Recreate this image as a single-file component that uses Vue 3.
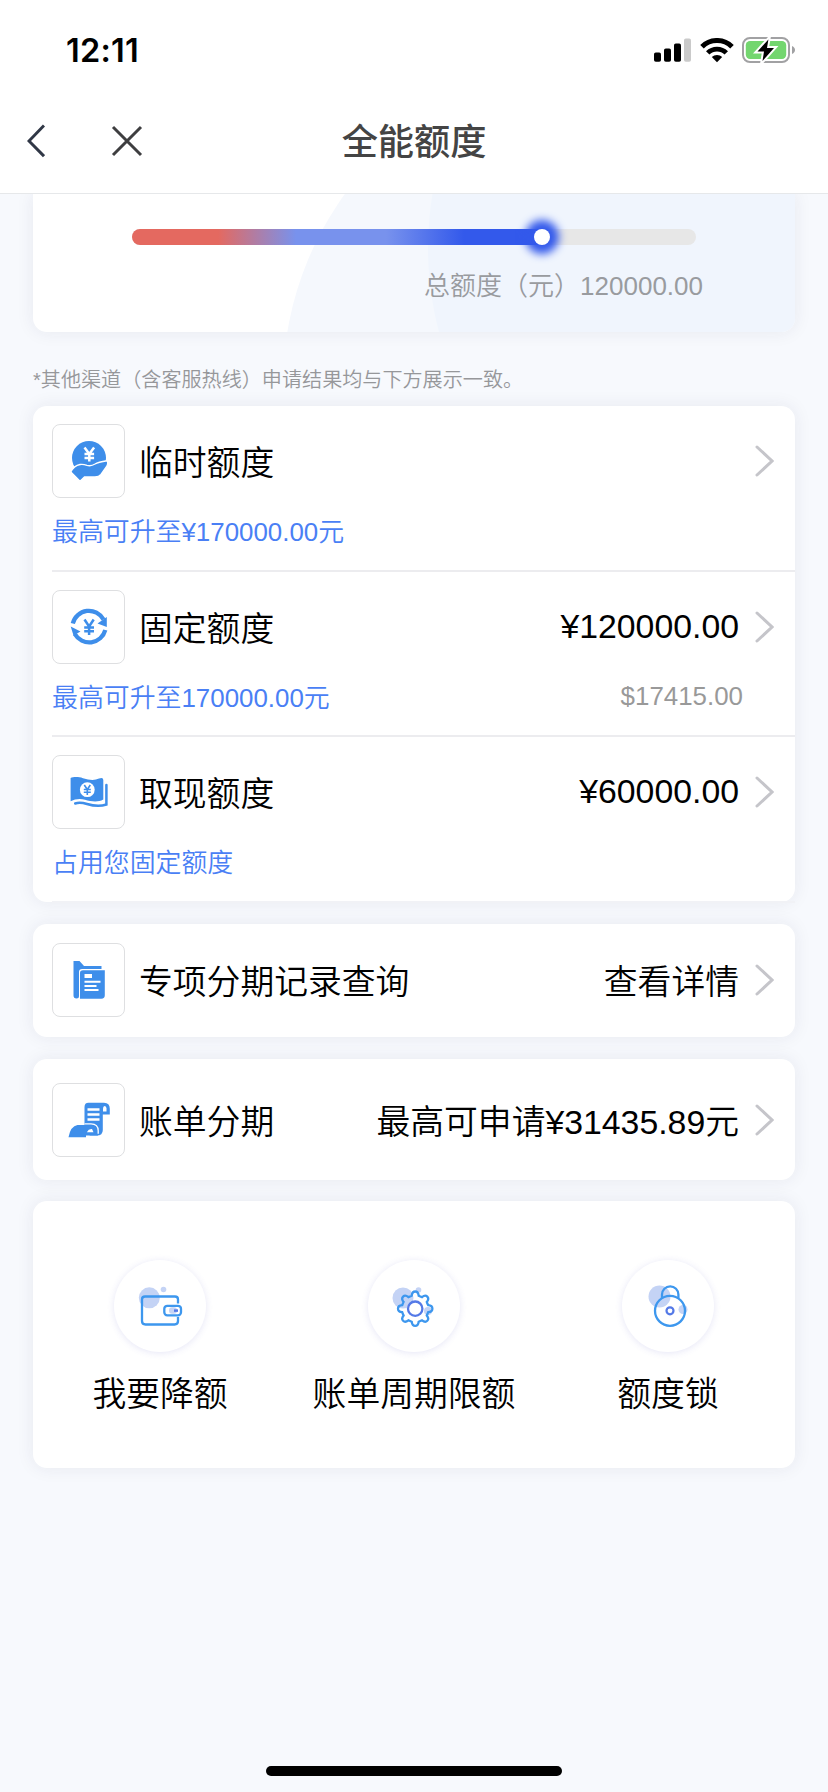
<script setup>
const limits = [
  { icon: 'hand', label: '临时额度', amount: '', note: '最高可升至¥170000.00元', sub: '' },
  { icon: 'cycle', label: '固定额度', amount: '¥120000.00', note: '最高可升至170000.00元', sub: '$17415.00' },
  { icon: 'cash', label: '取现额度', amount: '¥60000.00', note: '占用您固定额度', sub: '' },
]
const used = 72.7
</script>

<template>
  <div class="screen">
    <header class="header">
      <div class="status">
        <span class="time">12:11</span>
        <div class="indicators">
          <svg class="signal" width="38" height="24" viewBox="0 0 38 24">
            <rect x="0" y="14.5" width="7" height="9.2" rx="1.8" />
            <rect x="10" y="10.5" width="7" height="13.2" rx="1.8" />
            <rect x="20" y="5.5" width="7" height="18.2" rx="1.8" />
            <rect x="30" y="0.5" width="7" height="23.2" rx="1.8" fill="#cacaca" />
          </svg>
          <svg class="wifi" width="34" height="25" viewBox="0 0 34 25">
            <g fill="none" stroke="#000" stroke-width="5">
              <path d="M2 8.7a21.2 21.2 0 0 1 30 0" />
              <path d="M7.7 14.9a13.2 13.2 0 0 1 18.6 0" stroke-width="4.8" />
            </g>
            <path d="M17 24.2l-5.2-5.1a7.6 7.6 0 0 1 10.4 0z" />
          </svg>
          <svg class="battery" width="54" height="28" viewBox="0 0 54 28">
            <rect x="1" y="2" width="46" height="24" rx="7" fill="none" stroke="#a1a1a3" stroke-width="2" />
            <rect x="3.8" y="5" width="40.4" height="18" rx="4.2" fill="#73d66f" />
            <path d="M50 10c4 1.5 4 6.500 0 8z" fill="#a1a1a3" />
            <path d="M26.400 3.500L15.500 15.500h6.500L20.500 25l11.500-13h-7z" stroke="#fff" stroke-width="4" />
            <path d="M26.400 3.500L15.500 15.500h6.500L20.500 25l11.500-13h-7z" />
          </svg>
        </div>
      </div>
      <nav class="nav">
        <div class="nav-actions">
          <svg width="18" height="34" viewBox="0 0 18 34"><path d="M17 1.500L2 17l15 15.200" fill="none" stroke="#303746" stroke-width="3" /></svg>
          <svg width="32" height="32" viewBox="0 0 32 32"><path d="M2 2l28 28M30 2L2 30" fill="none" stroke="#3e3e40" stroke-width="3" /></svg>
        </div>
        <h1>全能额度</h1>
      </nav>
    </header>

    <main class="content">
      <section class="card summary">
        <svg class="rings" width="762" height="138" viewBox="33 194 762 138">
          <circle cx="609" cy="385" r="326" fill="#f5f8fd" />
          <circle cx="753" cy="248" r="325" fill="#f0f5fd" />
        </svg>
        <div class="track">
          <div class="fill" :style="{ width: used + '%' }"><i class="knob"></i></div>
        </div>
        <p class="total">总额度（元）120000.00</p>
      </section>

      <p class="hint">*其他渠道（含客服热线）申请结果均与下方展示一致。</p>

      <section class="card limits">
        <div v-for="item in limits" :key="item.icon" class="limit">
          <div class="row">
            <span class="tile">
              <svg v-if="item.icon === 'hand'" width="40" height="42" viewBox="0 0 40 42">
                <circle cx="20" cy="18" r="17" fill="#3e8eea" />
                <path d="M15.500 7.500l4.800 6.500 4.800-6.500M20.300 13.500v8M15.500 14h9.600M15.500 18h9.600" fill="none" stroke="#fff" stroke-width="2.500" />
                <path d="M1.800 32Q5 25.500 11 24.500Q14 24 18 25.300Q22 26.500 26 24Q29 22 38 20.700Q39.500 22.500 38 26L32 34.500Q30 37 26 37H15.500L11 41.200z" fill="#3e8eea" stroke="#fff" stroke-width="1.400" />
              </svg>
              <svg v-else-if="item.icon === 'cycle'" width="40" height="42" viewBox="0 0 40 42">
                <g fill="none" stroke="#3e8eea">
                  <path d="M3.800 17.500A16.600 16.600 0 0 1 34.500 13.500" stroke-width="4.300" />
                  <path d="M36.300 24A16.600 16.600 0 0 1 5.800 28" stroke-width="4.300" />
                  <path d="M15.500 13.500l4.600 7 4.600-7M20.100 20v9M15.200 21.500h9.800M15.200 25.300h9.800" stroke-width="2.500" />
                </g>
                <path d="M37.800 11v10L28.500 17.500zM1.700 20.500l9.800 5-7 4z" fill="#3e8eea" />
              </svg>
              <svg v-else width="40" height="42" viewBox="0 0 40 42">
                <path d="M1.600 7C4 6 9 5.500 14 7.200Q24 10.500 30 7.500Q34.300 6 34.300 9V28.500C29 31.500 22 30.500 16 28.700Q8 27 1.600 30.300z" fill="#3e8eea" />
                <path d="M37.400 14v19.500C30 36 24 34.800 18 33Q11 31 6.200 32.500" fill="none" stroke="#3e8eea" stroke-width="2.500" stroke-linecap="round" />
                <circle cx="18.300" cy="18.700" r="7.400" fill="#fff" />
                <path d="M15.300 14l3 4.500 3-4.500M18.300 18v6M14.800 18.500h7M14.800 21.300h7" fill="none" stroke="#3e8eea" stroke-width="1.600" />
              </svg>
            </span>
            <span class="label">{{ item.label }}</span>
            <span class="value money">{{ item.amount }}</span>
            <svg class="chevron" width="20" height="32" viewBox="0 0 20 32"><path d="M3 2l15 14L3 30" /></svg>
          </div>
          <div class="note"><span>{{ item.note }}</span><small>{{ item.sub }}</small></div>
        </div>
      </section>

      <section class="card records">
        <div class="row">
          <span class="tile">
            <svg width="40" height="42" viewBox="0 0 40 42">
              <path d="M4.500 2h6l4.500 5h17.500v3H13q-3 0-3 3v24q0 2.500-2.500 2.500-3 0-3-3z" fill="#3e8eea" />
              <path d="M14 11.200h21.800V36q0 3.800-3.500 3.800H11V14q0-2.800 3-2.800z" fill="#3e8eea" />
              <path d="M15.500 17h7.500" stroke="#fff" stroke-width="4" />
              <path d="M15.500 22.800h16M15.500 27h12M15.500 31h14" stroke="#fff" stroke-width="2" />
            </svg>
          </span>
          <span class="label">专项分期记录查询</span>
          <span class="value">查看详情</span>
          <svg class="chevron" width="20" height="32" viewBox="0 0 20 32"><path d="M3 2l15 14L3 30" /></svg>
        </div>
      </section>

      <section class="card installment">
        <div class="row">
          <span class="tile">
            <svg width="44" height="42" viewBox="0 0 44 42">
              <path d="M17.500 26V8q0-4.300 4-4.300h15.500q5.800 0 5.800 6v5.800h-7V31q0 5.500-6 5.500h-7z" fill="#3e8eea" />
              <path d="M36 12.500V9.500q0-2.500 1.700-2.500t1.800 2.500v3z" fill="#fff" />
              <path d="M20.500 10.500h12M20.500 15.500h12M20.500 20.500h12" stroke="#fff" stroke-width="2.700" />
              <path d="M1.500 38.200q2-11 9-12.200H26q5 1 5 6v4.500H19v1.700z" fill="#3e8eea" />
              <path d="M17.500 24.800H24q7.200 0 7.200 7v3" fill="none" stroke="#fff" stroke-width="1.300" />
              <path d="M19.800 33.200q2-3.700 5.200-3.200l1.500 3.200z" fill="#fff" />
            </svg>
          </span>
          <span class="label">账单分期</span>
          <span class="value">最高可申请¥31435.89元</span>
          <svg class="chevron" width="20" height="32" viewBox="0 0 20 32"><path d="M3 2l15 14L3 30" /></svg>
        </div>
      </section>

      <section class="card shortcuts">
        <div class="shortcut">
          <span class="round">
            <svg width="48" height="48" viewBox="0 0 48 48">
              <circle cx="13.300" cy="15.800" r="10.500" fill="#c4d3f5" />
              <circle cx="27.500" cy="7.500" r="2.800" fill="#c4d3f5" />
              <g fill="none" stroke="#3d97ee" stroke-width="2.300">
                <path d="M42 21.500v-4q0-3-3-3H9q-3 0-3 3V39q0 3.500 3.500 3.500h29q3.500 0 3.500-3.500v-4" />
                <rect x="28.300" y="23.800" width="16.700" height="9.500" rx="3" />
              </g>
              <rect x="33" y="25.300" width="8" height="6.500" rx="3" fill="#c4d3f5" />
              <path d="M38 28.600h4" stroke="#5479e7" stroke-width="2.500" />
            </svg>
          </span>
          <span>我要降额</span>
        </div>
        <div class="shortcut">
          <span class="round">
            <svg width="48" height="48" viewBox="0 0 48 48">
              <circle cx="13" cy="16" r="10.500" fill="#c4d3f5" />
              <circle cx="28.500" cy="8" r="2.800" fill="#c4d3f5" />
              <circle cx="38" cy="29" r="4" fill="#c4d3f5" />
              <path d="M20.500 13.700 Q21 9.500 24 9.500 Q27 9.500 27.500 13.700 Q29 14.500 30.800 15.100 Q34 12.500 36.100 14.600 Q38.200 16.700 35.600 19.900 Q36 21.500 37 23.200 Q41.200 23.500 41.200 26.700 Q41.200 29.800 37 30.200 Q36.200 31.900 35.600 33.500 Q38.200 36.700 36.100 38.800 Q34 40.900 30.800 38.300 Q29 39 27.500 39.700 Q27 43.900 24 43.900 Q21 43.900 20.500 39.700 Q18.800 39 17.200 38.300 Q14 40.900 11.900 38.800 Q9.800 36.700 12.400 33.500 Q11.700 31.900 11 30.200 Q6.800 29.800 6.800 26.700 Q6.800 23.500 11 23.200 Q11.700 21.500 12.400 19.900 Q9.800 16.700 11.900 14.600 Q14 12.500 17.200 15.100 Q18.800 14.400 20.500 13.700z" transform="translate(1.200 0)" fill="none" stroke="#3d97ee" stroke-width="2.300" />
              <circle cx="25.200" cy="26.700" r="7.200" fill="#fff" stroke="#5479e7" stroke-width="2.300" />
            </svg>
          </span>
          <span>账单周期限额</span>
        </div>
        <div class="shortcut">
          <span class="round">
            <svg width="48" height="48" viewBox="0 0 48 48">
              <circle cx="15.500" cy="14.500" r="11" fill="#c4d3f5" />
              <circle cx="39" cy="27.500" r="4.500" fill="#c4d3f5" />
              <g fill="none" stroke="#3d97ee" stroke-width="2.300">
                <circle cx="26" cy="28.800" r="15" />
                <path d="M18 16v-3.500a8.200 8.200 0 0 1 16.400 0V16" />
              </g>
              <circle cx="26" cy="28.800" r="3.500" fill="#fff" stroke="#5479e7" stroke-width="2.200" />
            </svg>
          </span>
          <span>额度锁</span>
        </div>
      </section>
    </main>
    <div class="home-bar"></div>
  </div>
</template>

<style>
body { background: #f7f9fd; }
</style>

<style scoped>
.screen {
  width: 828px;
  height: 1792px;
  box-sizing: border-box;
  display: flex;
  flex-direction: column;
  overflow: hidden;
  background: #f7f9fd;
  color: #000;
  font-family: "Liberation Sans", "Noto Sans CJK SC", sans-serif;
  font-size: 33.8px;
  font-weight: 350;
}
.header {
  position: relative;
  z-index: 1;
  box-sizing: border-box;
  height: 194px;
  flex: none;
  background: #fff;
  border-bottom: 1px solid #e6e8ea;
}
.status {
  height: 98px;
  box-sizing: border-box;
  padding: 2px 32px 0 66px;
  display: flex;
  align-items: center;
  justify-content: space-between;
}
.time { color: #000; font: 600 32.5px/40px Inter, sans-serif; letter-spacing: 0.2px; padding-top: 1px; }
.indicators { display: flex; align-items: center; }
.wifi { margin-left: 8px; }
.battery { margin-left: 8px; }
.nav {
  display: grid;
  grid-template-columns: 1fr auto 1fr;
  align-items: center;
  height: 86px;
}
.nav-actions { display: flex; align-items: center; padding-left: 27px; gap: 66px; }
h1 { margin: 0; padding-top: 4px; font-size: 36.2px; line-height: 54px; font-weight: 500; color: #444; }
.content { padding: 0 33px; }
.card {
  box-sizing: border-box;
  background: #fff;
  border-radius: 14px;
  box-shadow: 0 0 18px rgba(35, 35, 75, 0.08);
}
.summary {
  position: relative;
  height: 138px;
  padding: 35px 93px 0 99px;
  border-radius: 0 0 14px 14px;
  overflow: hidden;
}
.rings { position: absolute; inset: 0; }
.track {
  position: relative;
  width: 564px;
  height: 16px;
  border-radius: 8px;
  background: #e7e7e7;
}
.fill {
  height: 100%;
  display: flex;
  align-items: center;
  justify-content: flex-end;
  border-radius: 8px 0 0 8px;
  background: linear-gradient(90deg, #e46960 0 21%, #7892ed 40% 62%, #3359eb 81%);
}
.knob {
  width: 16px;
  height: 16px;
  margin-right: -8px;
  flex: none;
  border-radius: 50%;
  background: #fff;
  box-shadow: 0 0 8px 9px #3359eb;
}
.total {
  position: relative;
  margin: 21px -1px 0 0;
  line-height: 40px;
  font-size: 26px;
  color: #999b9f;
  text-align: right;
}
.hint { margin: 34px 0 11px; font-size: 20.1px; line-height: 29px; color: #96979a; }
.limits { height: 496px; }
.limit {
  position: relative;
  height: 165.5px;
  box-sizing: border-box;
  margin-left: 19px;
  padding-top: 18px;
  border-bottom: 2px solid #ececef;
}
.limit:last-child { border-bottom-color: #f1f2f6; }
.row { display: flex; align-items: center; height: 74px; padding-right: 21px; }
.tile {
  box-sizing: border-box;
  width: 73px;
  height: 74px;
  flex: none;
  display: flex;
  align-items: center;
  justify-content: center;
  border: 1px solid #dedfe1;
  border-radius: 8px;
}
.label { margin-left: 14px; padding-top: 4px; line-height: 50px; white-space: nowrap; }
.value { margin-left: auto; padding-top: 3px; line-height: 50px; white-space: nowrap; }
.value.money { padding: 0 0 2px; }
.chevron { margin-left: 15px; flex: none; }
.chevron path { fill: none; stroke: #c5c5ca; stroke-width: 3; stroke-linecap: round; }
.note {
  display: flex;
  justify-content: space-between;
  margin-top: 14px;
  padding-right: 52px;
  line-height: 40px;
  font-size: 25.9px;
  color: #4a7ff5;
}
.note small { font-size: 25.9px; line-height: 37px; color: #999; }
.records { height: 113px; margin-top: 22px; padding: 19px 0 0 19px; }
.installment { height: 121px; margin-top: 22px; padding: 24px 0 0 19px; }
.shortcuts {
  height: 267px;
  margin-top: 21px;
  padding-top: 59px;
  display: grid;
  grid-template-columns: repeat(3, 1fr);
}
.shortcut { display: flex; flex-direction: column; align-items: center; gap: 17px; line-height: 50px; }
.round {
  width: 92px;
  height: 92px;
  display: flex;
  align-items: center;
  justify-content: center;
  border-radius: 50%;
  background: #fff;
  box-shadow: 0 1px 7px rgba(75, 75, 190, 0.14);
}
.home-bar { width: 296px; height: 10px; margin: auto auto 16px; border-radius: 5px; background: #000; flex: none; }
</style>
